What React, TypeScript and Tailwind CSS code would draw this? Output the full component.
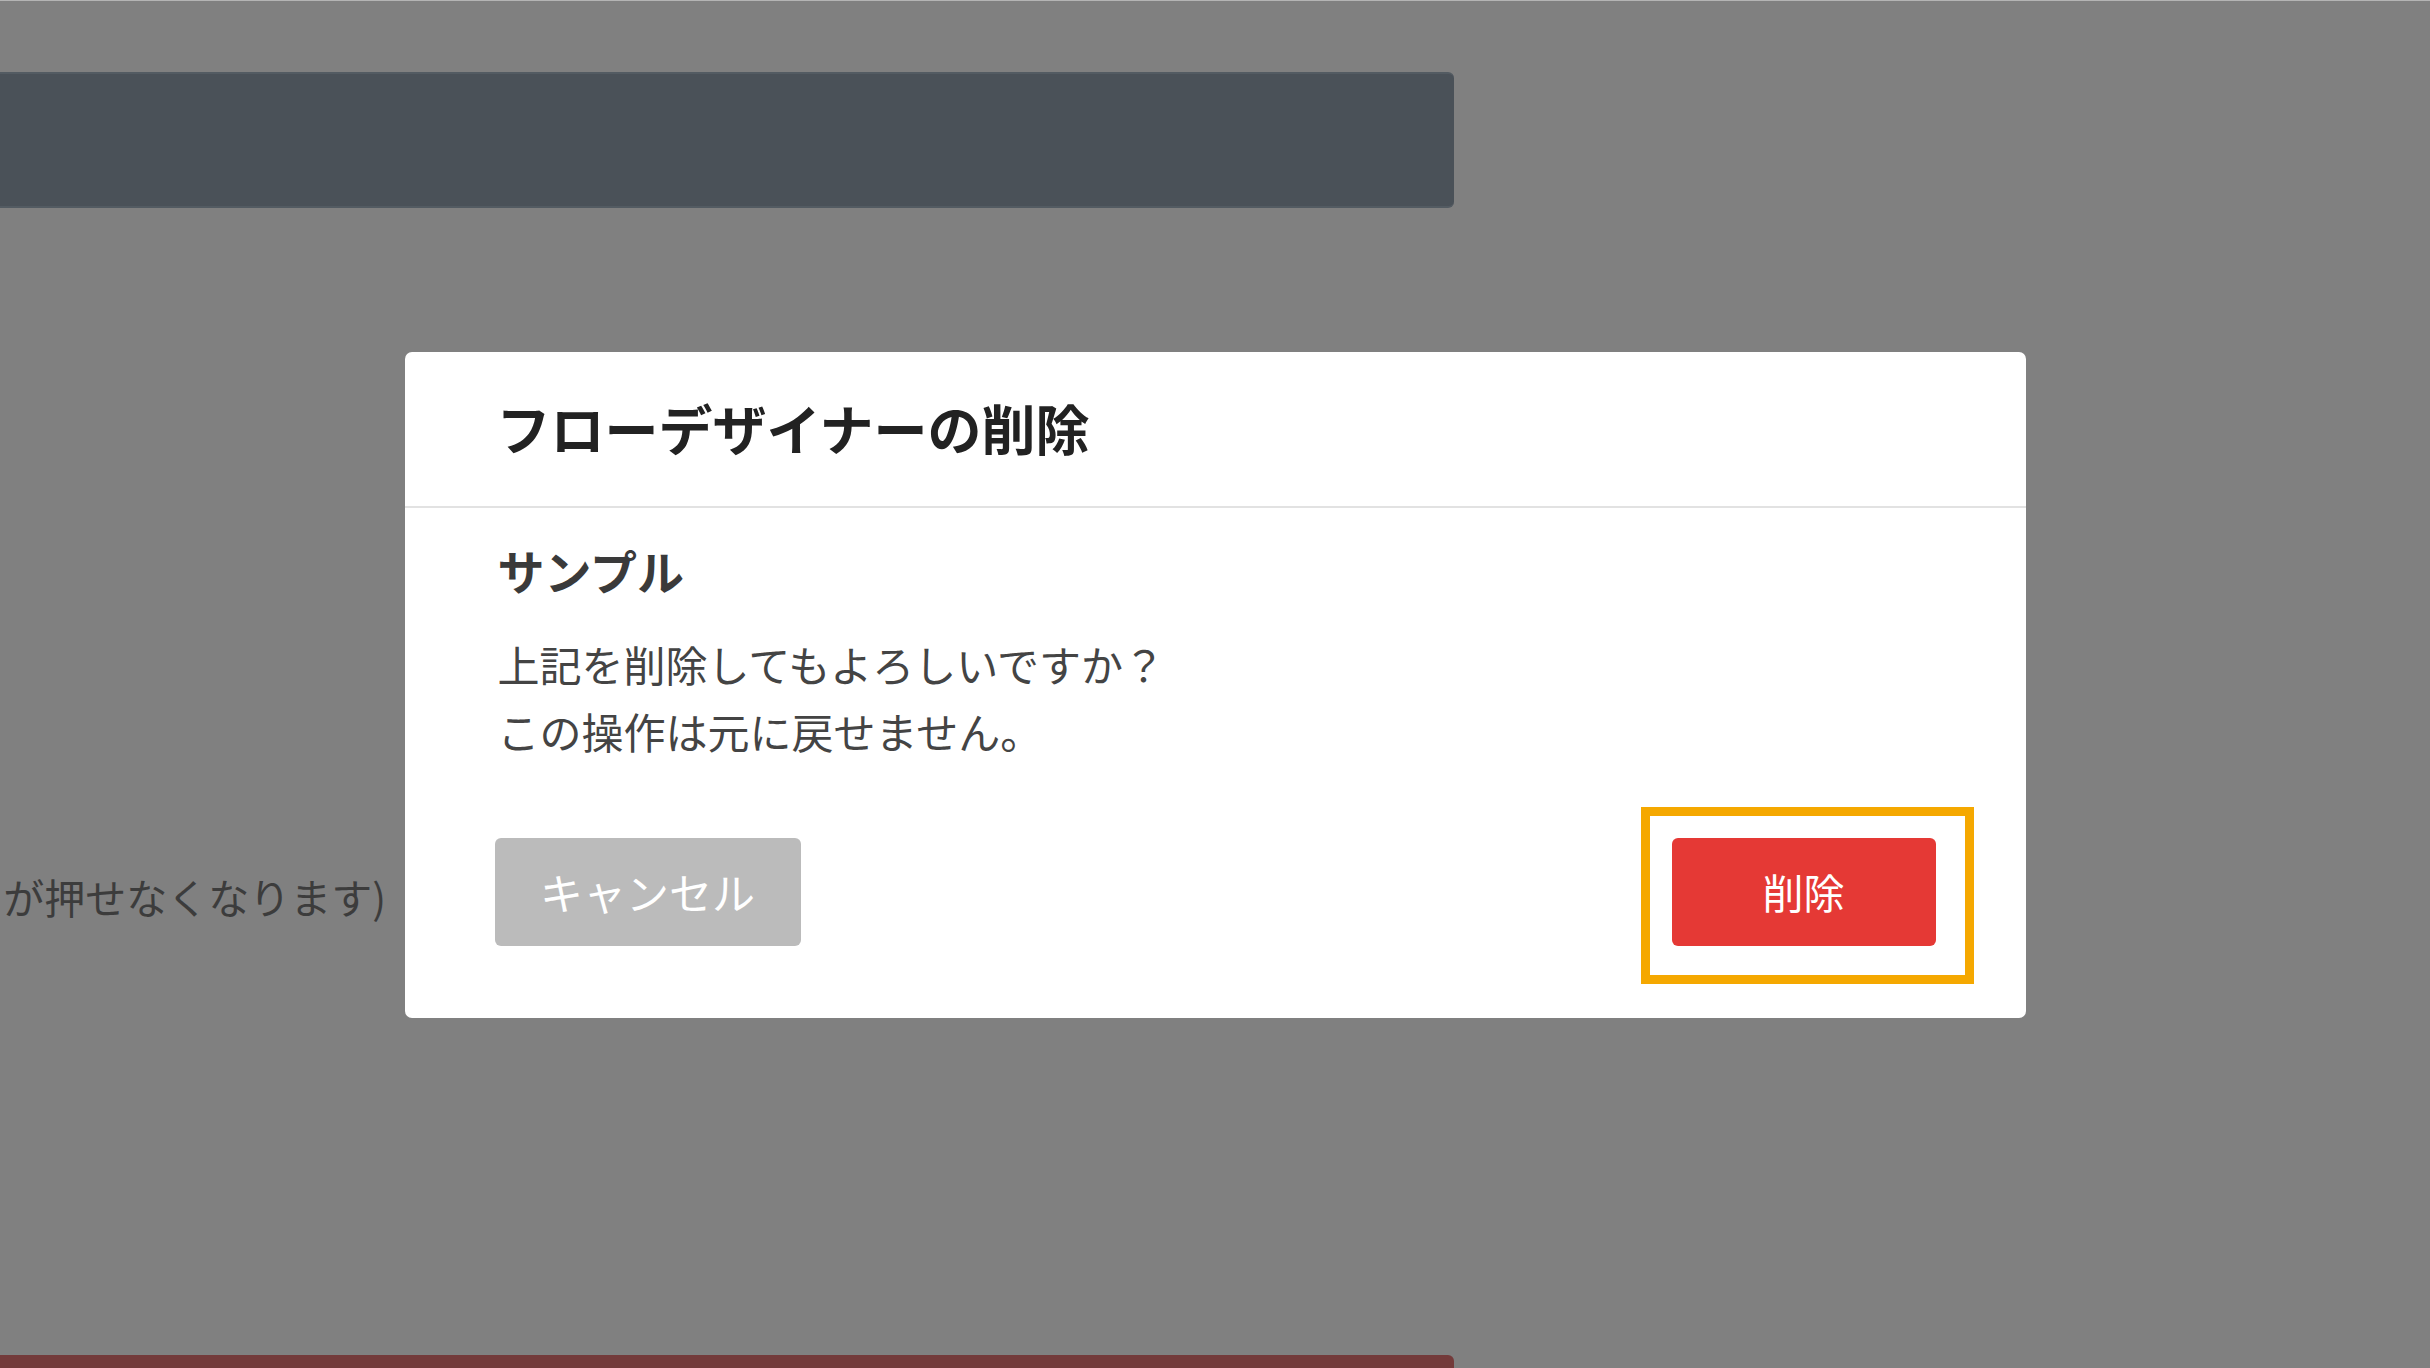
import React from "react";

const font = { fontFamily: '"Noto Sans CJK JP", "Noto Sans", sans-serif' };

export default function App() {
  return (
    <div
      className="relative w-[2430px] h-[1368px] overflow-hidden bg-[#808080] border-t border-[#b4b4b4]"
      style={font}
    >
      {/* underlying page (dimmed) */}
      <div className="flex flex-col w-[1454px] pt-[71px]">
        <div className="h-[136px] w-full bg-[#4a5158] rounded-r-[6px] border-y-2 border-[#535b62]" />
        <div className="mt-[658px] h-[60px] w-[386px] flex items-center justify-end whitespace-nowrap">
          <span className="text-[41px] leading-[60px] text-[#3c3c3c]">が押せなくなります)</span>
        </div>
        <div className="mt-[429px] h-[14px] w-full bg-[#733a3a] rounded-tr-[6px]" />
      </div>

      {/* overlay + dialog */}
      <div className="absolute inset-0 flex items-center justify-center">
        <div className="w-[1621px] bg-white rounded-[7px] flex flex-col">
          <div className="h-[156px] flex items-center px-[92px] pb-[2px] border-b-2 border-[#e2e2e2]">
            <h1 className="text-[54px] font-bold leading-none text-[#222222]">
              フローデザイナーの削除
            </h1>
          </div>
          <div className="flex flex-col px-[90px] pt-[27px] pb-[72px]">
            <div className="pl-[3px] text-[47px] font-bold leading-[69px] text-[#3a3a3a]">サンプル</div>
            <div className="mt-[26px] pl-[3px] text-[42px] leading-[67px] text-[#444444]">
              <p>上記を削除してもよろしいですか？</p>
              <p>この操作は元に戻せません。</p>
            </div>
            <div className="mt-[74px] flex items-center justify-between">
              <button className="w-[306px] h-[108px] rounded-[6px] bg-[#bbbbbb] text-white text-[43px] flex items-center justify-center">
                キャンセル
              </button>
              <div className="relative">
                <div className="absolute left-[-31px] top-[-31px] w-[333px] h-[177px] border-[9px] border-[#f5a800]" />
                <button className="relative w-[264px] h-[108px] rounded-[6px] bg-[#e53935] text-white text-[41px] flex items-center justify-center">
                  削除
                </button>
              </div>
            </div>
          </div>
        </div>
      </div>
    </div>
  );
}
